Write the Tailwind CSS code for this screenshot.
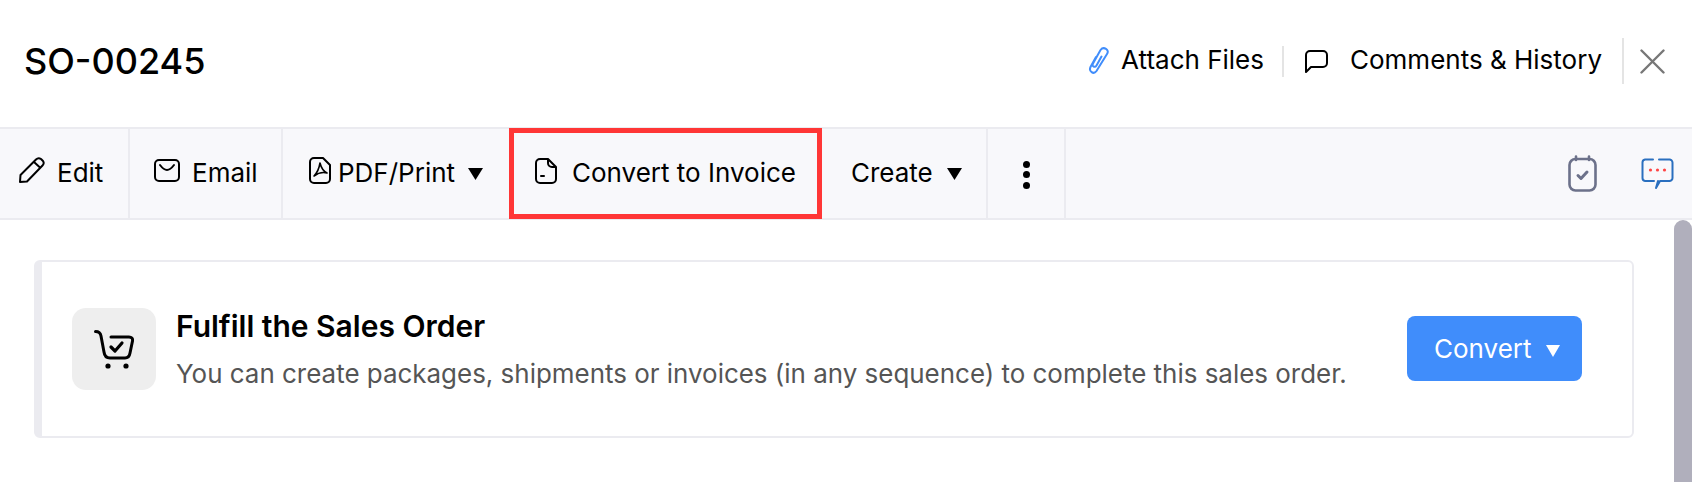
<!DOCTYPE html>
<html lang="en">
<head>
  <meta charset="UTF-8">
  <title>SO-00245</title>
  <script src="https://cdn.jsdelivr.net/npm/@tailwindcss/browser@4"></script>
</head>
<body class="h-[482px] overflow-hidden bg-white text-black [font-family:Inter,sans-serif]">
  <!-- header -->
  <header class="flex h-[127px] items-center pl-[24px] pb-[5px]">
    <h1 class="text-[36px] font-medium leading-none">SO-00245</h1>
    <div class="ml-auto flex items-center">
      <svg class="w-[24px] h-[28px]" viewBox="0 0 24 28" fill="none" stroke="#408dfb" stroke-width="2" stroke-linecap="round"><path d="M9 10 L3.5 20 C1.5 24.5 6.5 28 9.5 24 L20 7 C23 2.5 16.5 -1 13.5 3 L6 16.5 C4.5 19.5 8 21 9.5 18.5 L14.5 9.5"/></svg>
      <span class="ml-[10px] -mt-[2px] text-[26px] leading-none">Attach Files</span>
      <span class="ml-[18px] h-[31px] w-[2px] bg-[#e4e4e4]"></span>
      <svg class="ml-[20px] w-[25px] h-[25px]" viewBox="0 0 25 25" fill="none" stroke="#000" stroke-width="2" stroke-linejoin="round"><path d="M6 2 H19 A4 4 0 0 1 23 6 V14 A4 4 0 0 1 19 18 H7 L2 23 V6 A4 4 0 0 1 6 2 Z"/></svg>
      <span class="ml-[21px] -mt-[2px] text-[26px] leading-none">Comments &amp; History</span>
      <span class="ml-[20px] h-[46px] w-[2px] bg-[#e4e4e4]"></span>
      <svg class="ml-[16px] mr-[27px] w-[25px] h-[25px]" viewBox="0 0 25 25" stroke="#777" stroke-width="2.4" stroke-linecap="round"><path d="M1.5 1.5 L23.5 23.5 M23.5 1.5 L1.5 23.5"/></svg>
    </div>
  </header>

  <!-- toolbar -->
  <nav class="flex h-[93px] items-stretch border-y-2 border-[#ebebf0] bg-[#f8f8fb] text-[26px]">
    <div class="flex w-[130px] items-center border-r-2 border-[#ebebf0] pl-[18px]">
      <svg class="-mt-[6px] w-[27px] h-[27px]" viewBox="0 0 27 27" fill="none" stroke="#000" stroke-width="2" stroke-linejoin="round"><path d="M2 25 L2.5 18 L18 2.5 C19.5 1 21.5 1 23 2 L25 4 C26 5.5 26 7 24.5 8.5 L9 24.5 Z M16 5 L22.5 11"/></svg>
      <span class="ml-[12px] -mt-[2px]">Edit</span>
    </div>
    <div class="flex w-[153px] items-center border-r-2 border-[#ebebf0] pl-[24px]">
      <svg class="-mt-[6px] w-[26px] h-[23px]" viewBox="0 0 26 23" fill="none" stroke="#000" stroke-width="2" stroke-linecap="round"><rect x="1" y="1" width="24" height="21" rx="4"/><path d="M6 6 C9 10 11 11 13 11 C15 11 17 10 20 6"/></svg>
      <span class="ml-[12px] -mt-[2px]">Email</span>
    </div>
    <div class="flex w-[226px] items-center pl-[26px]">
      <svg class="-mt-[6px] w-[22px] h-[27px]" viewBox="0 0 22 27" fill="none" stroke="#000" stroke-width="2" stroke-linejoin="round"><path d="M5 1 H14 L21 8 V22 A4 4 0 0 1 17 26 H5 A4 4 0 0 1 1 22 V5 A4 4 0 0 1 5 1 Z"/><path d="M11 6 C10 12 8 16 5 19 C9 16 14 15 18 16 C14 14 12 10 11 6 Z" stroke-width="1.6"/></svg>
      <span class="ml-[7px] -mt-[2px]">PDF/Print</span>
      <svg class="ml-[13px] w-[15px] h-[12px]" viewBox="0 0 15 12" fill="#000"><path d="M0 0 H15 L7.5 12 Z"/></svg>
    </div>
    <div class="-my-[1px] flex w-[313px] items-center border-[5px] border-[#ff3636] pl-[21px]">
      <svg class="-mt-[6px] w-[22px] h-[26px]" viewBox="0 0 22 26" fill="none" stroke="#000" stroke-width="2" stroke-linejoin="round" stroke-linecap="round"><path d="M5 1 H13 V5 A4 4 0 0 0 17 9 H21 V21 A4 4 0 0 1 17 25 H5 A4 4 0 0 1 1 21 V5 A4 4 0 0 1 5 1 Z M13 1 L21 9"/><path d="M6 18 H9"/></svg>
      <span class="ml-[15px] -mt-[2px]">Convert to Invoice</span>
    </div>
    <div class="flex w-[166px] items-center border-r-2 border-[#ebebf0] pl-[29px]">
      <span class="-mt-[2px]">Create</span>
      <svg class="ml-[14px] w-[15px] h-[12px]" viewBox="0 0 15 12" fill="#000"><path d="M0 0 H15 L7.5 12 Z"/></svg>
    </div>
    <div class="flex w-[78px] flex-col items-center justify-center gap-[3.5px] border-r-2 border-[#ebebf0] pt-[2px]">
      <span class="size-[7px] rounded-full bg-black"></span>
      <span class="size-[7px] rounded-full bg-black"></span>
      <span class="size-[7px] rounded-full bg-black"></span>
    </div>
    <div class="ml-auto flex items-center pr-[18px]">
      <svg class="w-[29px] h-[37px]" viewBox="0 0 29 37" fill="none" stroke="#6c718a" stroke-width="2.6" stroke-linecap="round" stroke-linejoin="round"><rect x="1.5" y="4" width="26" height="31.5" rx="6"/><path d="M8 1.5 V5 M21 1.5 V5"/><path d="M10 20.5 L13 23.5 L19 17" stroke-width="3"/></svg>
      <svg class="ml-[44px] w-[33px] h-[32px]" viewBox="0 0 33 32" fill="none" stroke="#2a6fbf" stroke-width="2" stroke-linecap="round" stroke-linejoin="round"><path d="M12 1.5 H4 A3 3 0 0 0 1.5 4.5 V20 A3 3 0 0 0 4 23 H13 M18 1.5 H28 A3 3 0 0 1 31.5 4.5 V20 A3 3 0 0 1 28 23 H19 L15 30 L17 23"/><circle cx="9.5" cy="12" r="1.6" fill="#f44" stroke="none"/><circle cx="16.5" cy="12" r="1.6" fill="#f44" stroke="none"/><circle cx="23.5" cy="12" r="1.6" fill="#f44" stroke="none"/></svg>
    </div>
  </nav>

  <!-- content -->
  <main class="relative h-[262px] pt-[40px] pl-[34px]">
    <div class="flex h-[178px] w-[1600px] items-center rounded-[6px] border-2 border-l-[8px] border-[#ebebf0] pl-[30px] pr-[50px]">
      <div class="flex h-[82px] w-[84px] items-center justify-center rounded-[14px] bg-[#eeeeee]">
        <svg class="w-[40px] h-[39px]" viewBox="0 0 40 39" fill="none" stroke="#000" stroke-width="3" stroke-linecap="round" stroke-linejoin="round"><path d="M1.5 1.5 C5 1.5 6.5 3 7 6 L10 22 C10.5 26 13 28 16 28 H31 C34 28 35.5 26 36 23 L38.5 11 C39 8.5 37.5 7 35 7 H17"/><path d="M17 17 L21 21 L28 13" stroke-width="3.2"/><circle cx="14" cy="36" r="2.6" fill="#000" stroke="none"/><circle cx="32" cy="36" r="2.6" fill="#000" stroke="none"/></svg>
      </div>
      <div class="ml-[20px]">
        <h2 class="text-[30px] font-semibold leading-[36px]">Fulfill the Sales Order</h2>
        <p class="mt-[14px] text-[25.95px] leading-[32px] text-[#555555]">You can create packages, shipments or invoices (in any sequence) to complete this sales order.</p>
      </div>
      <button class="ml-auto mb-[2px] flex h-[65px] w-[175px] items-center rounded-[8px] bg-[#408dfb] pl-[27px] text-[26px] text-white">
        <span>Convert</span>
        <svg class="ml-[14px] mt-[5px] w-[14px] h-[12px]" viewBox="0 0 14 12" fill="#fff"><path d="M0 0 H14 L7 12 Z"/></svg>
      </button>
    </div>
    <div class="absolute right-0 top-0 h-full w-[18px] rounded-t-[9px] bg-[#b0afbc]"></div>
  </main>
</body>
</html>
